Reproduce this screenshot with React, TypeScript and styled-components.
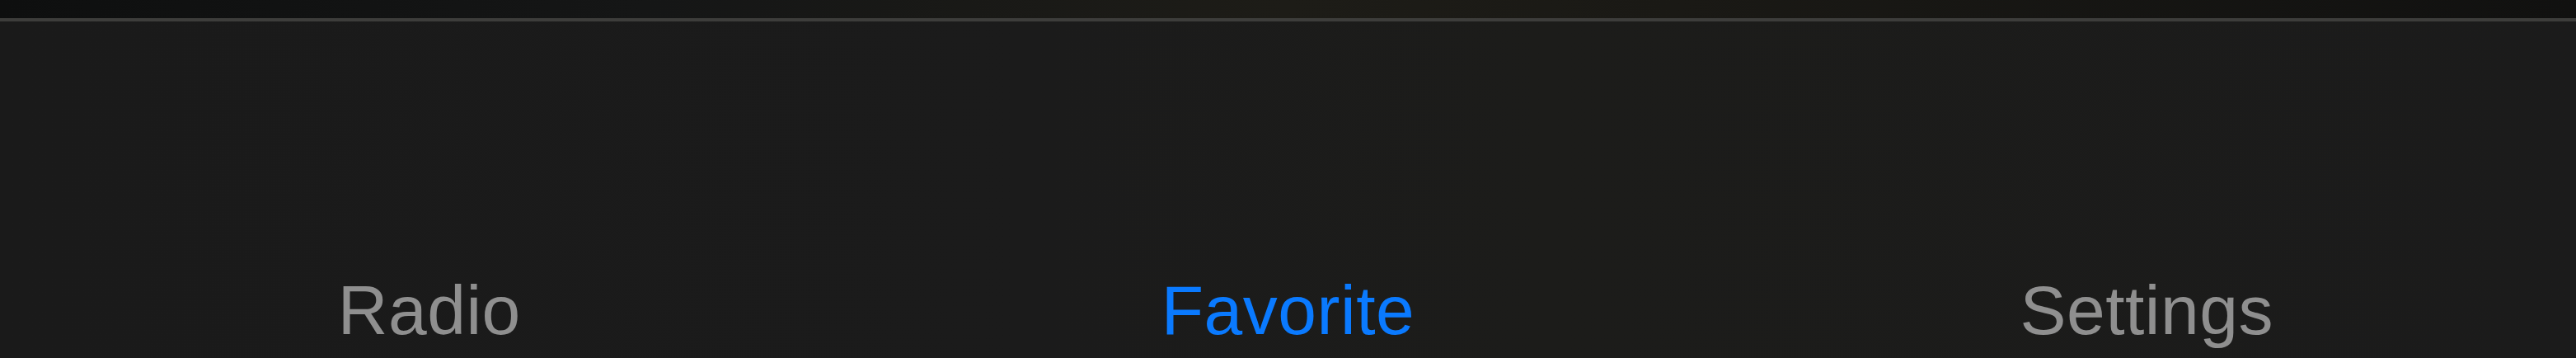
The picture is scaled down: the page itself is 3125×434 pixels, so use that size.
import styled, { createGlobalStyle } from "styled-components";

const GlobalStyle = createGlobalStyle`
  html, body {
    margin: 0;
    padding: 0;
    background: #1b1b1b;
  }
  #root {
    height: 434px;
  }
`;

const Screen = styled.div`
  display: flex;
  flex-direction: column;
  height: 100%;
  font-family: "Liberation Sans", Arial, sans-serif;
`;

const TopStrip = styled.div`
  height: 22px;
  background: linear-gradient(90deg, #0e0f0f 0%, #151616 25%, #1d1c17 50%, #1a1915 65%, #111110 100%);
  border-bottom: 4px solid #3d3d3b;
`;

const TabBar = styled.nav`
  flex: 1;
  display: grid;
  grid-template-columns: repeat(3, 1fr);
  align-items: end;
  background: linear-gradient(90deg, #1a1a1a 0%, #1b1b1b 40%, #1c1c1a 60%, #1b1b1b 100%);
  padding-bottom: 16px;
`;

const TabLabel = styled.div<{ $active?: boolean }>`
  text-align: center;
  font-size: 84px;
  line-height: 1;
  letter-spacing: 0.5px;
  color: ${(p) => (p.$active ? "#0a7aff" : "#8f8f8f")};
`;

const tabs = [
  { label: "Radio", active: false },
  { label: "Favorite", active: true },
  { label: "Settings", active: false },
];

export default function App() {
  return (
    <>
      <GlobalStyle />
      <Screen>
        <TopStrip />
        <TabBar>
          {tabs.map((t) => (
            <TabLabel key={t.label} $active={t.active}>
              {t.label}
            </TabLabel>
          ))}
        </TabBar>
      </Screen>
    </>
  );
}
